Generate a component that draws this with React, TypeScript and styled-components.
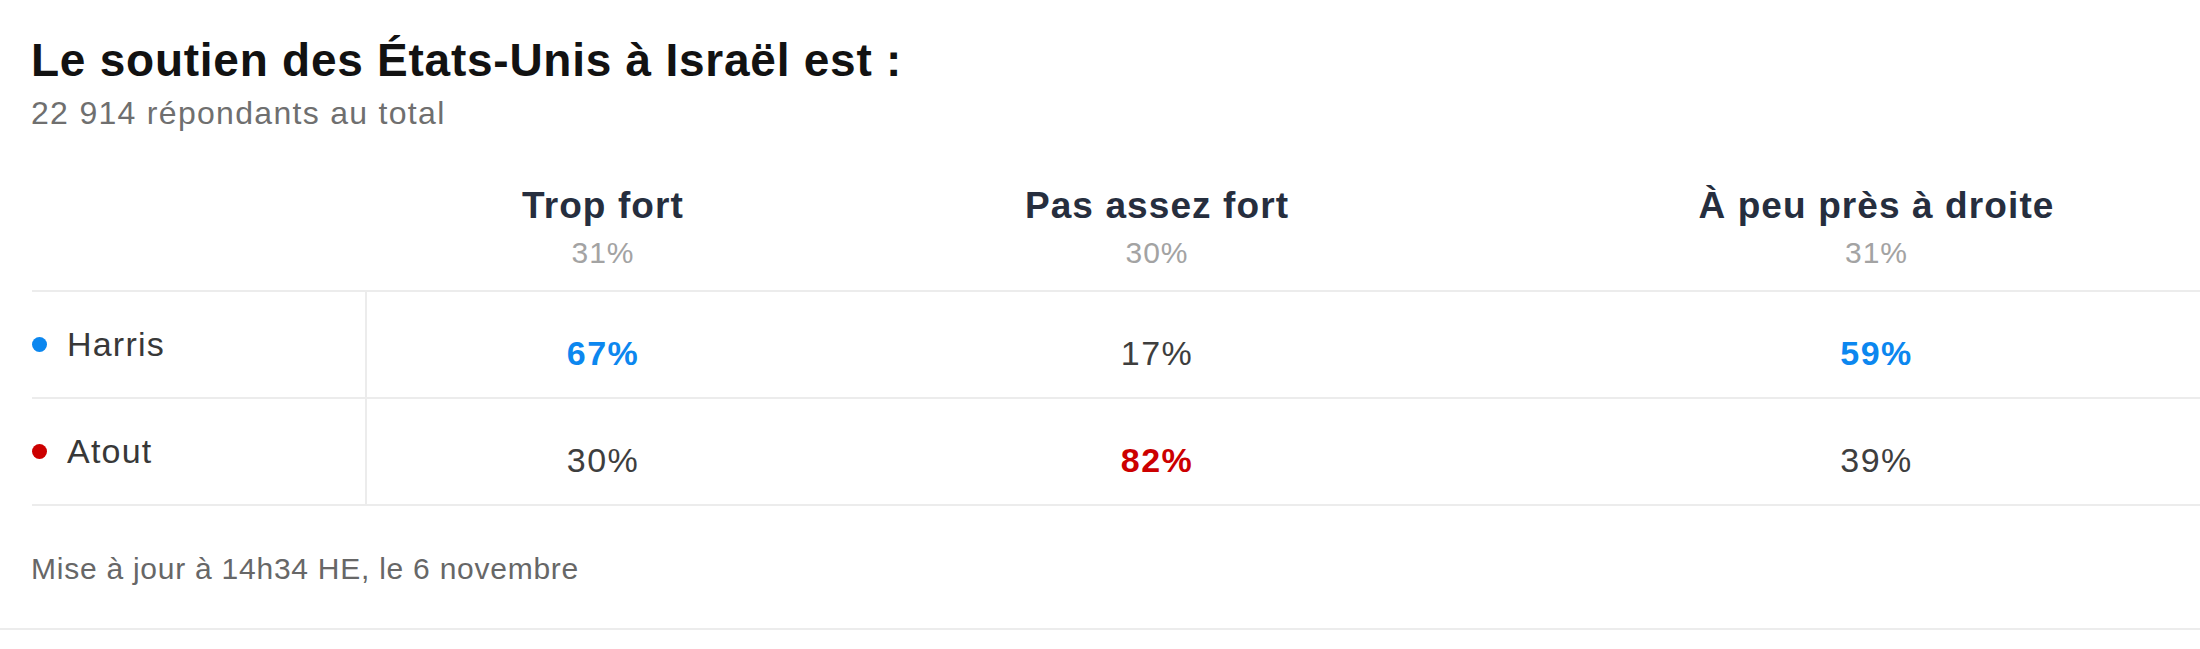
import React from 'react'
import styled, { createGlobalStyle } from 'styled-components'

type Cell = { value: string; lead?: 'harris' | 'trump' }
type Row = { name: string; party: 'harris' | 'trump'; cells: Cell[] }

const columns = [
  { label: 'Trop fort', share: '31%' },
  { label: 'Pas assez fort', share: '30%' },
  { label: 'À peu près à droite', share: '31%' },
]

const rows: Row[] = [
  {
    name: 'Harris',
    party: 'harris',
    cells: [{ value: '67%', lead: 'harris' }, { value: '17%' }, { value: '59%', lead: 'harris' }],
  },
  {
    name: 'Atout',
    party: 'trump',
    cells: [{ value: '30%' }, { value: '82%', lead: 'trump' }, { value: '39%' }],
  },
]

const partyColor = {
  harris: '#0c87ef',
  trump: '#cc0000',
}

const App = () => {
  return (
    <>
      <GlobalStyle />
      <Page>
        <Header>
          <Title>Le soutien des États-Unis à Israël est :</Title>
          <Subtitle>22 914 répondants au total</Subtitle>
        </Header>
        <Table>
          <TableRow>
            <LabelCell />
            {columns.map((c) => (
              <HeadCell key={c.label}>
                <HeadLabel>{c.label}</HeadLabel>
                <HeadShare>{c.share}</HeadShare>
              </HeadCell>
            ))}
          </TableRow>
          {rows.map((r) => (
            <TableRow key={r.name}>
              <LabelCell divider>
                <Dot color={partyColor[r.party]} />
                <Name>{r.name}</Name>
              </LabelCell>
              {r.cells.map((c, i) => (
                <ValueCell key={i}>
                  <Value color={c.lead ? partyColor[c.lead] : undefined}>{c.value}</Value>
                </ValueCell>
              ))}
            </TableRow>
          ))}
        </Table>
        <Footer>
          <Updated>Mise à jour à 14h34 HE, le 6 novembre</Updated>
        </Footer>
      </Page>
    </>
  )
}

export default App

const GlobalStyle = createGlobalStyle`
  html, body {
    margin: 0;
    padding: 0;
    background: #fff;
    overflow: hidden;
  }
  body {
    font-family: "Liberation Sans", Arial, sans-serif;
  }
`

const Page = styled.div`
  width: 2200px;
  overflow: hidden;
`

const Header = styled.div`
  padding: 33px 0 0 31px;
  display: flex;
  flex-direction: column;
  gap: 8px;
`

const Title = styled.h1`
  margin: 0;
  font-size: 46px;
  line-height: 54px;
  font-weight: 700;
  letter-spacing: 0.75px;
  color: #121212;
`

const Subtitle = styled.div`
  font-size: 32px;
  line-height: 36px;
  letter-spacing: 1.3px;
  color: #6f6f6f;
`

const Table = styled.div`
  margin: 54px 0 0 32px;
  width: 2246px;
`

const TableRow = styled.div`
  display: grid;
  grid-template-columns: 335px 472px 636px 803px;
  border-bottom: 2px solid #ececec;
  min-height: 105px;
`

const LabelCell = styled.div<{ divider?: boolean }>`
  display: flex;
  align-items: center;
  gap: 20px;
  border-right: 2px solid ${(p) => (p.divider ? '#ececec' : 'transparent')};
`

const Dot = styled.span<{ color: string }>`
  width: 15px;
  height: 15px;
  border-radius: 50%;
  background: ${(p) => p.color};
  flex: none;
`

const Name = styled.span`
  font-size: 34px;
  letter-spacing: 1.2px;
  color: #383838;
`

const HeadCell = styled.div`
  display: flex;
  flex-direction: column;
  align-items: center;
  padding-bottom: 18px;
`

const HeadLabel = styled.div`
  font-size: 37px;
  line-height: 42px;
  font-weight: 700;
  letter-spacing: 1.1px;
  color: #262e3e;
`

const HeadShare = styled.div`
  margin-top: 9px;
  font-size: 30px;
  line-height: 34px;
  letter-spacing: 1px;
  color: #a3a3a3;
`

const ValueCell = styled.div`
  display: flex;
  align-items: center;
  justify-content: center;
  padding-top: 17px;
`

const Value = styled.span<{ color?: string }>`
  font-size: 34px;
  letter-spacing: 1.5px;
  font-weight: ${(p) => (p.color ? 700 : 400)};
  color: ${(p) => p.color || '#3e3e3e'};
`

const Footer = styled.div`
  margin-top: 46px;
  padding: 0 0 42px 31px;
  border-bottom: 2px solid #ececec;
`

const Updated = styled.div`
  font-size: 30px;
  line-height: 34px;
  letter-spacing: 0.75px;
  color: #676767;
`
